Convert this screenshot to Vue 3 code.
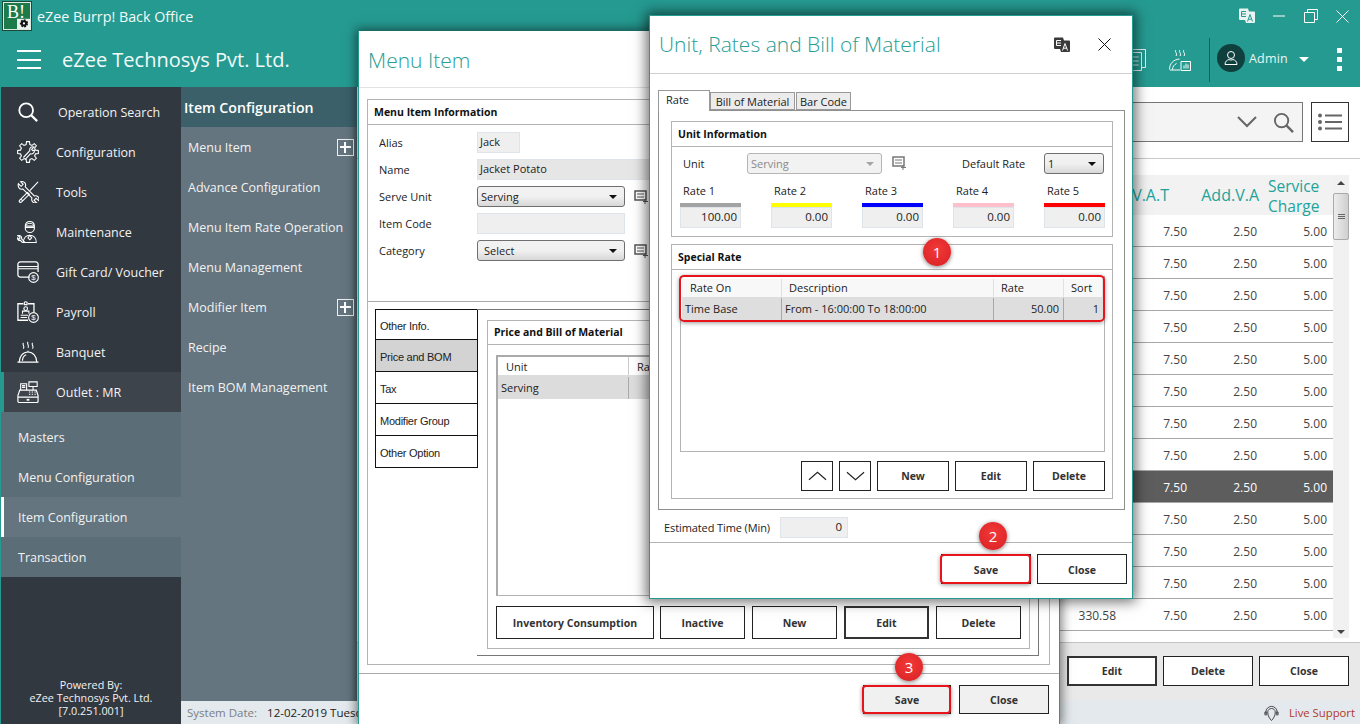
<script setup>
const gearPath = (() => {
  const pts = []
  const n = 8
  for (let i = 0; i < n; i++) {
    const a = (i / n) * Math.PI * 2
    const w = Math.PI / n
    const p = (r, t) => `${(12 + r * Math.cos(t)).toFixed(2)} ${(12 + r * Math.sin(t)).toFixed(2)}`
    pts.push(p(8.4, a - w * 0.62), p(11.4, a - w * 0.36), p(11.4, a + w * 0.36), p(8.4, a + w * 0.62))
  }
  return 'M' + pts.join('L') + 'Z'
})()
const navTop = [
  { label: 'Operation Search', icon: 'search' },
  { label: 'Configuration', icon: 'gear' },
  { label: 'Tools', icon: 'tools' },
  { label: 'Maintenance', icon: 'man' },
  { label: 'Gift Card/ Voucher', icon: 'card' },
  { label: 'Payroll', icon: 'payroll' },
  { label: 'Banquet', icon: 'banquet' },
]
const navSub = ['Masters', 'Menu Configuration', 'Item Configuration', 'Transaction']
const subMenu = [
  { label: 'Menu Item', plus: true },
  { label: 'Advance Configuration' },
  { label: 'Menu Item Rate Operation' },
  { label: 'Menu Management' },
  { label: 'Modifier Item', plus: true },
  { label: 'Recipe' },
  { label: 'Item BOM Management' },
]
const rows = Array.from({ length: 13 }, (_, i) => i)
const rates = [
  { label: 'Rate 1', value: '100.00', color: '#a3a3a3' },
  { label: 'Rate 2', value: '0.00', color: '#ffff00' },
  { label: 'Rate 3', value: '0.00', color: '#0000ff' },
  { label: 'Rate 4', value: '0.00', color: '#ffc0cb' },
  { label: 'Rate 5', value: '0.00', color: '#ff0000' },
]
const sideTabs = ['Other Info.', 'Price and BOM', 'Tax', 'Modifier Group', 'Other Option']
</script>

<template>
  <div class="app">
    <div class="titlebar">
      <div class="logo">
        <span>B!</span>
        <svg class="logo-gear" viewBox="0 0 14 14"><rect x="0" y="3" width="14" height="11" fill="#e9f1ec"/><circle cx="7.500" cy="8" r="3.300" fill="#111" stroke="#111" stroke-width="2.200" stroke-dasharray="1.800 1.200"/><circle cx="7.500" cy="8" r="1.200" fill="#fff"/></svg>
      </div>
      <div class="app-title">eZee Burrp! Back Office</div>
      <div class="winctl">
        <svg class="w-tr" viewBox="0 0 16 16"><path d="M0 1.500a1 1 0 0 1 1-1h8l1 3h5a1 1 0 0 1 1 1V14a1 1 0 0 1-1 1H7l-1-3H1a1 1 0 0 1-1-1z" fill="#e8f3f2"/><path d="M2.500 3.500h4.500M2.500 6h4.500M2.500 8.500h4.500M2.500 3.500v5" stroke="#259a91" fill="none"/><path d="M8.500 13.500l2.500-7 2.500 7M9.500 11.200h3" stroke="#259a91" fill="none"/></svg>
        <svg class="w-min" viewBox="0 0 12 2"><path d="M0 1h12" stroke="#fff"/></svg>
        <svg class="w-max" viewBox="0 0 14 14"><path d="M.5 3.500h10v10H.5zM3.500 3.500v-3h10v10h-3" fill="none" stroke="#fff"/></svg>
        <svg class="w-cls" viewBox="0 0 13 13"><path d="M.5.500l12 12M12.500.500l-12 12" stroke="#fff"/></svg>
      </div>
    </div>
    <div class="header">
      <div class="burger"><i></i><i></i><i></i></div>
      <div class="company">eZee Technosys Pvt. Ltd.</div>
      <div class="head-right">
        <svg class="h-doc" viewBox="0 0 26 22" fill="none" stroke="#e8f3f2"><path d="M3.500 3.500h18v18h-18zM6 3.500V.5h19.500v18h-4M6.500 8h12M6.500 12h12M6.500 16h12"/></svg>
        <svg class="h-chart" viewBox="0 0 22 22" fill="none" stroke="#fff"><path d="M7 1c-2 2 2 3 0 6M11 1c-2 2 2 3 0 6M15 1c-2 2 2 3 0 6M.5 20.500c0-6 4-10 10-10.500M3.500 20.500c0-3 2-5 4-6M1 21h10M12 12.500h9.500v9H12zM15 19.500v-3M17 19.500v-5M19 19.500v-4"/></svg>
        <div class="h-sep"></div>
        <div class="avatar"><svg viewBox="0 0 18 18" fill="none" stroke="#fff"><circle cx="9" cy="6" r="3.500"/><path d="M3 15.500c0-3 2-4.500 4-5 1 .7 3 .7 4 0 2 .5 4 2 4 5z"/></svg></div>
        <div class="admin">Admin</div>
        <div class="caret"></div>
        <div class="dots"><i></i><i></i><i></i></div>
      </div>
    </div>

    <div class="body">
      <aside class="sidebar">
        <div class="nav-top">
          <div v-for="n in navTop" :key="n.label" class="nav-item">
            <svg class="nav-ico" viewBox="0 0 24 24" fill="none" stroke="#fff" stroke-width="1.200">
              <template v-if="n.icon === 'search'"><circle cx="10" cy="10" r="7.500" stroke-width="2"/><path d="M15.500 15.500l6.500 6.500" stroke-width="2.500"/></template>
              <template v-if="n.icon === 'gear'"><path :d="gearPath"/><path d="M7 18l7-7.500c-1-3 2-5 4.500-4l-2.500 2.500 1 1.500 2-.5c.5 2.500-2 5-4.500 4L9 20" /></template>
              <template v-if="n.icon === 'tools'"><path d="M23 1l-9 9.500M11.500 12.500L3 20.800c-1.500 1.700.5 3.400 2 2L13.500 14.500l-2-2zM4 19.500l2 2"/><path d="M1.500 3l3 2.800 2.200-2.200L4 .8c3.500-1 6.500 2 5 5.500l9.800 10c3.500-1 6.200 2 5 5.200l-3-2.700-2.200 2.200 2.700 2.700c-3.300 1-6.200-1.800-5-5.200L6.300 8.700C3.300 10 .5 6.800 1.500 3z"/></template>
              <template v-if="n.icon === 'man'"><circle cx="14" cy="7.500" r="5"/><path d="M9 5.500c.5-6.500 9.500-6.500 10 0zM9 7h10M7 23.500c0-5 3-8 7-8s7 3 7 8zM1 16l2.500 2.500L2 20l-1.500-1.500c0 2 1.500 3 3 2.500l3 3 1.500-1.500-3-3c.5-2-1-4-3.500-3.500zM14 15.500l-2 3 2 2 2-2z"/></template>
              <template v-if="n.icon === 'card'"><path d="M14 17.500H3.500A2.500 2.500 0 0 1 1 15V3.500A2.500 2.500 0 0 1 3.500 1h17A2.500 2.500 0 0 1 23 3.500V12" stroke-width="1.400"/><path d="M1 6h22M1 8.500h22" stroke-width="1.200"/><circle cx="18" cy="18" r="5.300"/><text x="18" y="21" text-anchor="middle" font-size="8.500" fill="#fff" stroke="none" font-family="Liberation Sans, sans-serif">$</text></template>
              <template v-if="n.icon === 'payroll'"><path d="M12 21H1V3h6M12 3h6.500v9" stroke-width="1.400"/><path d="M8 1.500a2 2 0 0 1 3 0v2.500H8zM6 14v-3h7v3M4 15.500h8M4 18h7"/><circle cx="9.500" cy="8.300" r="2"/><circle cx="18" cy="18" r="5.300"/><text x="18" y="21" text-anchor="middle" font-size="8.500" fill="#fff" stroke="none" font-family="Liberation Sans, sans-serif">$</text></template>
              <template v-if="n.icon === 'banquet'"><path d="M.5 23h23M2.500 23c0-6 4-11 9.500-11s9.500 5 9.500 11M6 21.500c0-3 1.500-5.500 4-6.500" stroke-width="1.300"/><path d="M12 10.500V12M7 2c-2 2 2 3.500 0 6.500M12 1c-2 2 2 3.500 0 6.500M17 2c-2 2 2 3.500 0 6.500"/></template>
            </svg>
            <span :class="{ 'nav-os': n.icon === 'search' }">{{ n.label }}</span>
          </div>
        </div>
        <div class="nav-outlet">
          <svg class="nav-ico" viewBox="0 0 24 24" fill="none" stroke="#fff" stroke-width="1.200"><path d="M1 16l2-6h18l2 6v6a1.500 1.500 0 0 1-1.500 1.500h-19A1.500 1.500 0 0 1 1 22zM1 17.500h22" stroke-width="1.300"/><path d="M4 10V3h6.500v7M5.500 5h3.500M5.500 7h3.500M13 1h9v5h-9zM17.500 6v4M13 12h1.500M16 12h1.500M19 12h1.500M13 14.500h1.500M16 14.500h1.500M19 14.500h1.500"/><path d="M10.500 20.500h3" stroke-width="2"/></svg>
          <span>Outlet : MR</span>
        </div>
        <div class="nav-subs">
          <div v-for="s in navSub" :key="s" class="nav-sub" :class="{ active: s === 'Item Configuration' }">{{ s }}</div>
        </div>
        <div class="powered">Powered By:<br>eZee Technosys Pvt. Ltd.<br>[7.0.251.001]</div>
      </aside>

      <div class="submenu">
        <div class="sub-head">Item Configuration</div>
        <div class="sub-list">
          <div v-for="m in subMenu" :key="m.label" class="sub-item">
            <span>{{ m.label }}</span>
            <i v-if="m.plus" class="plus"></i>
          </div>
        </div>
      </div>

      <main class="content">
        <div class="search-row">
          <div class="search-box">
            <svg class="chev" viewBox="0 0 20 12"><path d="M1 1l9 9 9-9" fill="none" stroke="#666" stroke-width="2"/></svg>
            <svg class="mag" viewBox="0 0 22 22" fill="none" stroke="#666"><circle cx="9" cy="9" r="7" stroke-width="2"/><path d="M14 14l7 7" stroke-width="2.500"/></svg>
          </div>
          <div class="list-btn">
            <svg viewBox="0 0 24 18"><g fill="#666"><circle cx="2" cy="2.500" r="2"/><circle cx="2" cy="9" r="2"/><circle cx="2" cy="15.500" r="2"/><rect x="7" y="1.500" width="17" height="2"/><rect x="7" y="8" width="17" height="2"/><rect x="7" y="14.500" width="17" height="2"/></g></svg>
          </div>
        </div>
        <div class="table-wrap">
          <div class="grid">
            <div class="g-head">
              <span class="g-vat">V.A.T</span><span class="g-add">Add.V.A</span><span class="g-svc">Service<br>Charge</span>
            </div>
            <div v-for="r in rows" :key="r" class="g-row" :class="{ sel: r === 8 }">
              <span class="g-amt">{{ r === 12 ? '330.58' : '' }}</span>
              <span>7.50</span><span>2.50</span><span>5.00</span>
            </div>
          </div>
          <div class="vscroll">
            <div class="sb-up"></div>
            <div class="sb-thumb"><i></i><i></i><i></i></div>
            <div class="sb-dn"></div>
          </div>
        </div>
        <div class="foot-btns">
          <button class="btn thick">Edit</button>
          <button class="btn">Delete</button>
          <button class="btn">Close</button>
        </div>
        <div class="statusbar">
          <span class="sys"><b>System Date:</b><em>12-02-2019 Tuesday</em></span>
          <span class="live">
            <svg viewBox="0 0 18 18" fill="none" stroke="#444"><path d="M3 10V8a6 6 0 0 1 12 0v2M2 8v3h2V8zM14 8v3h2V8z"/><path d="M5 8c0-5 8-5 8 0 0 4-2 7-4 9-2-2-4-5-4-9z"/></svg>
            Live Support
          </span>
        </div>
      </main>
    </div>

    <!-- Menu Item window -->
    <section class="win-menu">
      <div class="wm-title">Menu Item</div>
      <div class="wm-body">
        <div class="wm-panel">
          <div class="panel-title">Menu Item Information</div>
          <div class="form">
            <label>Alias</label><div class="tb tb-alias">Jack</div>
            <label>Name</label><div class="tb tb-name">Jacket Potato</div>
            <label>Serve Unit</label><div class="row-ic"><div class="cb cb-f">Serving</div><svg class="add-ic" viewBox="0 0 14 14"><path d="M1 1h11v9H1z" fill="none" stroke="#555" stroke-width="1.500"/><path d="M3 4h7M3 7h7" stroke="#555"/><path d="M11 9v5M9 11.500h5" stroke="#555"/></svg></div>
            <label>Item Code</label><div class="tb tb-code"></div>
            <label>Category</label><div class="row-ic"><div class="cb cb-f cb-sel">Select</div><svg class="add-ic" viewBox="0 0 14 14"><path d="M1 1h11v9H1z" fill="none" stroke="#555" stroke-width="1.500"/><path d="M3 4h7M3 7h7" stroke="#555"/><path d="M11 9v5M9 11.500h5" stroke="#555"/></svg></div>
          </div>
          <div class="wm-lower">
            <div class="side-tabs">
              <div v-for="t in sideTabs" :key="t" class="side-tab" :class="{ on: t === 'Price and BOM' }">{{ t }}</div>
            </div>
            <div class="tab-body">
              <div class="price-box">
                <div class="panel-title price-title">Price and Bill of Material</div>
                <div class="price-inner">
                  <div class="price-table">
                    <div class="pt-head"><span class="pt-u">Unit</span><span class="pt-r">Rate</span></div>
                    <div class="pt-row"><span class="pt-u2">Serving</span><span></span></div>
                  </div>
                  <div class="price-btns">
                    <button class="btn b-inv">Inventory Consumption</button>
                    <button class="btn b-85">Inactive</button>
                    <button class="btn b-85">New</button>
                    <button class="btn b-85 thick">Edit</button>
                    <button class="btn b-85">Delete</button>
                  </div>
                </div>
              </div>
            </div>
          </div>
        </div>
      </div>
      <div class="wm-foot">
        <button class="btn grey marked">Save</button>
        <button class="btn grey b-close">Close</button>
      </div>
    </section>

    <!-- Unit window -->
    <section class="win-unit">
      <div class="wu-title">
        <span>Unit, Rates and Bill of Material</span>
        <svg class="wu-tr" viewBox="0 0 16 16"><path d="M0 1.500a1 1 0 0 1 1-1h8l1 3h5a1 1 0 0 1 1 1V14a1 1 0 0 1-1 1H7l-1-3H1a1 1 0 0 1-1-1z" fill="#3a3a3a"/><path d="M2.500 3.500h4.500M2.500 6h4.500M2.500 8.500h4.500M2.500 3.500v5" stroke="#fff" fill="none"/><path d="M8.500 13.500l2.500-7 2.500 7M9.500 11.200h3" stroke="#fff" fill="none"/></svg>
        <svg class="wu-x" viewBox="0 0 13 13"><path d="M.5.500l12 12M12.500.500l-12 12" stroke="#111"/></svg>
      </div>
      <div class="wu-body">
        <div class="tabs">
          <div class="tab on">Rate</div>
          <div class="tab t-bom">Bill of Material</div>
          <div class="tab t-bar">Bar Code</div>
        </div>
        <div class="tab-panel">
          <div class="box">
            <div class="panel-title">Unit Information</div>
            <div class="unit-line">
              <label class="u-lab">Unit</label>
              <div class="cb cb-dis">Serving</div>
              <svg class="add-ic a2" viewBox="0 0 14 14"><path d="M1 1h11v9H1z" fill="none" stroke="#777" stroke-width="1.500"/><path d="M3 4h7M3 7h7" stroke="#777"/><path d="M11 9v5M9 11.500h5" stroke="#777"/></svg>
              <label class="d-lab">Default Rate</label>
              <div class="cb cb-def">1</div>
            </div>
            <div class="rates">
              <div v-for="r in rates" :key="r.label" class="rate">
                <div class="rate-lab">{{ r.label }}</div>
                <div class="rate-bar" :style="{ background: r.color }"></div>
                <div class="rate-val">{{ r.value }}</div>
              </div>
            </div>
          </div>
          <div class="box box2">
            <div class="panel-title">Special Rate</div>
            <div class="sr-wrap">
              <div class="sr-table">
                <div class="sr-head"><span class="c1">Rate On</span><span class="c2">Description</span><span class="c3">Rate</span><span class="c4">Sort</span></div>
                <div class="sr-row"><span class="c1">Time Base</span><span class="c2">From - 16:00:00 To 18:00:00</span><span class="c3">50.00</span><span class="c4">1</span></div>
              </div>
              <div class="sr-mark"></div>
            </div>
            <div class="sr-btns">
              <button class="btn arrow"><svg viewBox="0 0 20 10"><path d="M1 9l9-8 9 8" fill="none" stroke="#222" stroke-width="1.200"/></svg></button>
              <button class="btn arrow"><svg viewBox="0 0 20 10"><path d="M1 1l9 8 9-8" fill="none" stroke="#222" stroke-width="1.200"/></svg></button>
              <button class="btn b-72">New</button>
              <button class="btn b-72">Edit</button>
              <button class="btn b-72">Delete</button>
            </div>
          </div>
        </div>
        <div class="est">
          <label>Estimated Time (Min)</label>
          <div class="est-val">0</div>
        </div>
      </div>
      <div class="wu-foot">
        <button class="btn marked b-90">Save</button>
        <button class="btn b-90">Close</button>
      </div>
    </section>

    <div class="badge b1">1</div>
    <div class="badge b2">2</div>
    <div class="badge b3">3</div>
  </div>
</template>

<style>
html, body { margin: 0; padding: 0; background: #259a91; overflow: hidden; }
</style>

<style scoped>
.app { position: relative; width: 1360px; height: 724px; overflow: hidden; background: #259a91; font-family: "Open Sans", "Noto Sans", sans-serif; font-size: 12px; color: #222; display: flex; flex-direction: column; }
button { font-family: inherit; }

.titlebar { height: 32px; display: flex; align-items: center; flex: none; }
.logo { position: relative; margin-left: 3px; width: 26px; height: 26px; background: #1c7a4b; border: 1.500px solid #dfe9e4; outline: 1px solid #1d4a35; color: #fff; font: 18px "Liberation Serif", serif; text-align: center; line-height: 22px; box-sizing: content-box; }
.logo span { position: relative; top: -2px; left: -1px; }
.logo-gear { position: absolute; right: 0; bottom: 0; width: 13px; height: 13px; }
.app-title { margin-left: 6px; color: #fff; font-size: 14.300px; opacity: .95; }
.winctl { margin-left: auto; display: flex; align-items: center; }
.winctl svg { display: block; }
.w-tr { width: 16px; height: 16px; margin-right: 18px; }
.w-min { width: 12px; height: 2px; margin-right: 19px; }
.w-max { width: 14px; height: 14px; margin-right: 18px; }
.w-cls { width: 13px; height: 13px; margin-right: 11px; }

.header { height: 55px; display: flex; align-items: center; flex: none; }
.burger { margin-left: 17px; width: 24px; display: flex; flex-direction: column; gap: 6.500px; }
.burger i { display: block; height: 2px; background: #fff; }
.company { margin-left: 21px; color: #f3fbfa; font-size: 20px; }
.head-right { margin-left: auto; display: flex; align-items: center; }
.h-doc { width: 26px; height: 22px; margin-right: 23px; }
.h-chart { width: 22px; height: 22px; margin-right: 18px; }
.h-sep { width: 1px; height: 44px; background: #1b5f5b; margin-right: 7px; }
.avatar { width: 28px; height: 28px; border-radius: 50%; background: #0f403e; display: flex; align-items: center; justify-content: center; margin-bottom: 3px; }
.avatar svg { width: 18px; height: 18px; }
.admin { margin-left: 4px; color: #e9f6f5; font-size: 12.500px; letter-spacing: .2px; width: 46px; margin-bottom: 3px; }
.caret { margin-left: 4px; width: 0; height: 0; border-left: 5px solid transparent; border-right: 5px solid transparent; border-top: 5px solid #fff; }
.dots { margin-left: 28px; margin-right: 18px; display: flex; flex-direction: column; gap: 4px; }
.dots i { display: block; width: 5px; height: 5px; background: #fff; }

.body { flex: 1; display: flex; min-height: 0; padding-left: 1px; }
.sidebar { width: 180px; flex: none; background: #313840; display: flex; flex-direction: column; color: #fff; }
.nav-top { padding-top: 5px; }
.nav-item, .nav-outlet { height: 40px; display: flex; align-items: center; font-size: 12.500px; color: #f2f2f2; padding-left: 16px; box-sizing: border-box; }
.nav-ico { width: 22px; height: 22px; flex: none; margin-right: 17px; }
.nav-os { margin-left: 2px; }
.nav-outlet { background: #3d444c; border-left: 3px solid #259a91; padding-left: 13px; }
.nav-subs { display: flex; flex-direction: column; background: #5b6d76; }
.nav-sub { height: 40px; line-height: 42px; padding-left: 17px; font-size: 12.500px; color: #f2f2f2; box-sizing: border-box; }
.nav-sub:first-child { height: 45px; line-height: 52px; }
.nav-sub.active { background: #64757f; border-left: 3px solid #fff; padding-left: 14px; }
.powered { margin-top: auto; margin-bottom: 7px; text-align: center; font-size: 10.800px; line-height: 13px; color: #f2f2f2; }

.submenu { width: 176px; flex: none; background: #64757f; color: #fff; box-shadow: inset -5px 0 5px -3px rgba(0,0,0,.25); position: relative; }
.sub-head { height: 40px; background: #3b6069; line-height: 42px; padding-left: 3px; font-size: 14.200px; font-weight: 600; }
.sub-item { height: 40px; display: flex; align-items: center; justify-content: space-between; padding-left: 7px; font-size: 12.500px; color: #f2f2f2; }
.plus { width: 17px; height: 17px; margin-right: 3px; border: 1.500px solid #eee; box-sizing: border-box; position: relative; display: block; }
.plus::before, .plus::after { content: ""; position: absolute; background: #fff; }
.plus::before { left: 2px; right: 2px; top: 6px; height: 2px; }
.plus::after { top: 2px; bottom: 2px; left: 6px; width: 2px; }

.content { flex: 1; background: #fff; display: flex; flex-direction: column; min-width: 0; }
.search-row { height: 72px; flex: none; box-sizing: border-box; padding: 15px 11px 0 0; display: flex; justify-content: flex-end; gap: 8px; border-bottom: 1px solid #c9c9c9; }
.search-box { width: 660px; height: 40px; box-sizing: border-box; background: #f4f4f4; border: 1px solid #777; display: flex; align-items: center; justify-content: flex-end; padding-right: 8px; }
.chev { width: 20px; height: 12px; margin-right: 16px; }
.mag { width: 21px; height: 21px; }
.list-btn { width: 38px; height: 40px; box-sizing: border-box; border: 1px solid #333; display: flex; align-items: center; justify-content: center; }
.list-btn svg { width: 24px; height: 18px; }
.table-wrap { flex: 1; display: flex; justify-content: flex-end; padding: 16px 11px 4px 0; border-bottom: 1px solid #c4c4c4; min-height: 0; box-sizing: border-box; }
.grid { width: 300px; }
.g-head { height: 40px; background: #f2f2f2; color: #21a39a; font-size: 16px; position: relative; }
.g-head span { position: absolute; line-height: 19px; }
.g-vat { right: 164px; top: 11px; }
.g-add { right: 74px; top: 11px; white-space: nowrap; }
.g-svc { left: 235px; top: 1px; font-size: 15.500px; line-height: 20px !important; }
.g-row { height: 32px; padding-top: 1px; display: grid; grid-template-columns: 90px 70px 70px 70px; align-items: center; text-align: right; color: #444; font-size: 12px; border-bottom: 1px solid #a8a8a8; box-sizing: border-box; }
.g-row span { padding-right: 6px; }
.g-amt { position: relative; left: -1px; }
.g-row.sel { background: #5d5d5d; color: #fff; }
.vscroll { width: 16px; background: #f1f1f1; display: flex; flex-direction: column; align-items: center; }
.sb-up, .sb-dn { width: 100%; position: relative; flex: none; }
.sb-up { height: 18px; }
.sb-dn { height: 14px; margin-top: auto; }
.sb-up::after, .sb-dn::after { content: ""; position: absolute; left: 4px; top: 6px; border-left: 4px solid transparent; border-right: 4px solid transparent; }
.sb-up::after { border-bottom: 4px solid #444; }
.sb-dn::after { border-top: 4px solid #444; }
.sb-thumb { width: 100%; height: 47px; background: linear-gradient(90deg, #ececec, #cfcfcf); border: 1px solid #aaa; border-radius: 2px; box-sizing: border-box; display: flex; flex-direction: column; align-items: center; justify-content: center; gap: 1px; }
.sb-thumb i { display: block; width: 7px; height: 1px; background: #666; }
.foot-btns { height: 58px; flex: none; box-sizing: border-box; background: #e9e9e9; padding: 13px 11px 0 0; display: flex; justify-content: flex-end; gap: 6px; }
.foot-btns .btn { width: 90px; height: 30px; }
.statusbar { height: 23px; flex: none; background: #e3e9ed; display: flex; align-items: center; justify-content: space-between; margin-left: -176px; position: relative; }
.sys { margin-left: 6px; white-space: nowrap; }
.sys b { font-weight: 400; color: #7a8086; font-size: 11.500px; }
.sys em { font-style: normal; margin-left: 10px; color: #222; font-size: 11.500px; }
.live { display: flex; align-items: center; gap: 9px; color: #b0392a; font-size: 11.300px; margin-right: 5px; }
.live svg { width: 17px; height: 18px; }

.btn { box-sizing: border-box; background: #fff; border: 1px solid #222; font-size: 10.500px; font-weight: 700; color: #333; padding: 0; display: flex; align-items: center; justify-content: center; }
.btn.thick { border-width: 2px; border-color: #333; }
.btn.grey { background: #f0f0f0; }
.marked { position: relative; }
.marked::after { content: ""; position: absolute; left: -2px; top: -1px; right: -1px; bottom: -1px; border: 2px solid #e8141c; border-radius: 4px; box-shadow: 0 1px 4px rgba(0,0,0,.4); }

.panel-title { height: 25px; line-height: 24px; padding-left: 6px; font-size: 10.500px; font-weight: 700; color: #111; border-bottom: 1px solid #b4b4b4; box-sizing: border-box; flex: none; }

/* Menu item window */
.win-menu { position: absolute; left: 358px; top: 31px; width: 702px; height: 693px; background: #fff; border-left: 1px solid #259a91; border-right: 1px solid #259a91; box-sizing: border-box; box-shadow: 0 0 10px 2px rgba(0,0,0,.5); display: flex; flex-direction: column; }
.wm-title { height: 57px; flex: none; box-sizing: border-box; padding: 15px 0 0 9px; font-size: 21px; font-weight: 300; color: #2a9d94; line-height: 28px; border-bottom: 1px solid #e2e2e2; }
.wm-body { flex: 1; padding: 11px 9px 8px 8px; border-bottom: 1px solid #aaa; min-height: 0; display: flex; }
.wm-panel { flex: 1; border: 1px solid #b4b4b4; display: flex; flex-direction: column; min-width: 0; }
.form { height: 177px; box-sizing: border-box; padding-top: 4px; border-bottom: 1px solid #aaa; display: grid; grid-template-columns: 98px 1fr; grid-auto-rows: 27px; padding-left: 11px; align-items: center; flex: none; }
.form label { font-size: 11px; color: #222; }
.tb { box-sizing: border-box; height: 21px; background: #efefef; border: 1px solid #dfe4ea; font-size: 11px; line-height: 17px; padding-left: 2px; color: #222; }
.tb-alias { width: 43px; }
.tb-name { width: 180px; background: #e6e6e6; }
.tb-code { width: 148px; }
.row-ic { display: flex; align-items: center; gap: 9px; }
.cb { box-sizing: border-box; height: 21px; border: 1px solid #6f6f6f; border-radius: 3px; background: linear-gradient(#f2f2f2, #f0f0f0 50%, #d8d8d8); font-size: 11px; line-height: 19px; padding-left: 3px; position: relative; color: #222; }
.cb::after { content: ""; position: absolute; right: 7px; top: 8px; border-left: 4px solid transparent; border-right: 4px solid transparent; border-top: 4px solid #111; }
.cb-f { width: 148px; }
.cb-sel { padding-left: 6px; }
.add-ic { width: 14px; height: 14px; flex: none; }
.wm-lower { flex: 1; display: flex; padding: 7px 10px 8px 7px; min-height: 0; }
.side-tabs { width: 103px; flex: none; box-sizing: border-box; }
.side-tab { height: 32px; box-sizing: border-box; border: 1px solid #111; border-bottom: 0; padding-left: 4px; line-height: 34px; font-size: 11px; letter-spacing: -.25px; font-family: "Liberation Sans", sans-serif; color: #222; }
.side-tab:first-child { height: 30px; line-height: 33px; }
.side-tab:last-child { border-bottom: 1px solid #111; height: 33px; }
.side-tab.on { background: #d3d3d3; }
.tab-body { flex: 1; border: 1px solid #777; border-left: 0; padding: 10px 8px 6px 10px; display: flex; margin-left: -1px; min-width: 0; }
.price-box { flex: 1; border: 1px solid #b4b4b4; display: flex; flex-direction: column; min-width: 0; }
.price-title { height: 24px; line-height: 22px; padding-left: 6px; }
.price-inner { flex: 1; padding: 10px 8px 8px 8px; display: flex; flex-direction: column; min-height: 0; }
.price-table { height: 241px; box-sizing: border-box; border: 1px solid #b4b4b4; border-top: 2px solid #aaa; border-left: 2px solid #aaa; flex: none; }
.pt-head { height: 18px; display: flex; line-height: 20px; font-size: 11px; border-bottom: 2px solid #ddd; }
.pt-u { width: 131px; padding-left: 8px; box-sizing: border-box; border-right: 1px solid #ccc; }
.pt-r { padding-left: 8px; }
.pt-row { height: 22px; background: #dcdcdc; line-height: 22px; font-size: 11px; display: flex; }
.pt-u2 { width: 131px; padding-left: 3px; box-sizing: border-box; border-right: 1px solid #aaa; }
.price-btns { margin-top: 10px; display: flex; gap: 6px; height: 33px; }
.b-inv { width: 158px; flex: none; }
.b-85 { width: 85px; flex: none; }
.b-85:nth-child(n+3) { margin-left: 1px; }
.wm-foot { height: 50px; flex: none; box-sizing: border-box; padding: 11px 10px 0 0; display: flex; justify-content: flex-end; gap: 8px; }
.wm-foot .btn { width: 88px; height: 29px; }
.wm-foot .b-close { width: 90px; }

/* Unit window */
.win-unit { position: absolute; left: 649px; top: 15px; width: 484px; height: 584px; background: #fff; box-sizing: border-box; border: 1px solid #259a91; box-shadow: 0 0 12px 3px rgba(0,0,0,.55); display: flex; flex-direction: column; }
.wu-title { height: 58px; flex: none; box-sizing: border-box; border-bottom: 1px solid #cfcfcf; display: flex; align-items: center; padding-left: 9px; padding-bottom: 2px; font-size: 21px; color: #2a9d94; font-weight: 300; }
.wu-title span { flex: 1; }
.wu-title svg { position: relative; top: 1px; }
.wu-tr { width: 16px; height: 16px; margin-right: 28px; }
.wu-x { width: 13px; height: 13px; margin-right: 21px; }
.wu-body { flex: 1; border-bottom: 1px solid #b4b4b4; padding: 16px 7px 0 8px; display: flex; flex-direction: column; min-height: 0; }
.tabs { display: flex; height: 20px; align-items: flex-end; position: relative; z-index: 1; flex: none; }
.tab { box-sizing: border-box; height: 18px; border: 1px solid #999; background: #ececec; font-size: 11px; line-height: 17px; text-align: center; color: #222; }
.tab.on { height: 21px; width: 52px; background: #fff; border-bottom: 0; margin-bottom: -1px; line-height: 18px; text-align: left; padding-left: 7px; }
.t-bom { width: 85px; }
.t-bar { width: 55px; margin-left: 1px; }
.tab-panel { height: 400px; box-sizing: border-box; border: 1px solid #8f8f8f; padding: 10px 11px 10px 12px; display: flex; flex-direction: column; gap: 7px; flex: none; }
.box { border: 1px solid #b4b4b4; height: 116px; box-sizing: border-box; display: flex; flex-direction: column; flex: none; }
.box2 { height: 255px; }
.unit-line { height: 34px; padding-bottom: 2px; box-sizing: border-box; display: flex; align-items: center; padding-left: 11px; font-size: 11px; flex: none; }
.u-lab { width: 64px; }
.cb-dis { width: 135px; background: #f2f2f2; border-color: #b5b5b5; color: #8a8a8a; }
.cb-dis::after { border-top-color: #a5a5a5; }
.a2 { margin-left: 10px; }
.d-lab { margin-left: 56px; width: 82px; }
.cb-def { width: 60px; }
.rates { display: flex; padding-left: 8px; gap: 30px; }
.rate { width: 61px; }
.rate-lab { padding-left: 3px; font-size: 11px; height: 22px; line-height: 20px; }
.rate-bar { height: 4px; }
.rate-val { box-sizing: border-box; height: 21px; background: #efefef; border: 1px solid #dfe4ea; text-align: right; padding-right: 3px; line-height: 18px; font-size: 11.500px; }
.sr-wrap { position: relative; margin: 6px 7px 0 8px; flex: none; }
.sr-table { height: 176px; box-sizing: border-box; border: 1px solid #b4b4b4; font-size: 11px; padding: 2px 1px 0; }
.sr-head, .sr-row { display: grid; grid-template-columns: 100px 212px 70px 39px; }
.sr-head { height: 18px; line-height: 17px; border-bottom: 1px solid #ddd; background: #f8f8f8; }
.sr-row { height: 22px; line-height: 21px; background: #dedede; }
.sr-head span { border-right: 1px solid #e0e0e0; padding-left: 8px; }
.sr-head .c2 { padding-left: 7px; }
.sr-head .c3, .sr-head .c4 { padding-left: 7px; }
.sr-row span { border-right: 1px solid #a8a8a8; padding: 0 3px; white-space: nowrap; }
.sr-row .c3, .sr-row .c4 { text-align: right; padding-right: 4px; }
.sr-row .c4 { border-right: 0; }
.sr-mark { position: absolute; left: -1px; top: -1px; right: 0; height: 47px; box-sizing: border-box; border: 2px solid #e8141c; border-radius: 5px; box-shadow: 0 1px 4px rgba(0,0,0,.4); }
.sr-btns { display: flex; justify-content: flex-end; gap: 6px; margin: 9px 7px 0 0; height: 30px; }
.arrow { width: 32px; }
.arrow svg { width: 19px; height: 10px; }
.b-72 { width: 72px; }
.est { flex: none; height: 33px; display: flex; align-items: center; padding-left: 6px; padding-top: 1px; }
.est label { font-size: 11px; width: 116px; letter-spacing: -.1px; }
.est-val { width: 68px; height: 21px; box-sizing: border-box; background: #efefef; border: 1px solid #dfe4ea; text-align: right; padding-right: 5px; line-height: 18px; font-size: 11.500px; }
.wu-foot { height: 55px; flex: none; box-sizing: border-box; padding: 11px 5px 0 0; display: flex; justify-content: flex-end; gap: 6px; }
.b-90 { width: 90px; height: 30px; padding-top: 1px; }

.badge { position: absolute; width: 28px; height: 28px; border-radius: 50%; background: radial-gradient(circle at 50% 40%, #f23a3a, #d81f22); color: #fff; font-size: 15px; display: flex; align-items: center; justify-content: center; box-shadow: 0 1px 4px rgba(0,0,0,.5); }
.b1 { left: 923px; top: 238px; }
.b2 { left: 979px; top: 522px; }
.b3 { left: 895px; top: 653px; }
</style>
